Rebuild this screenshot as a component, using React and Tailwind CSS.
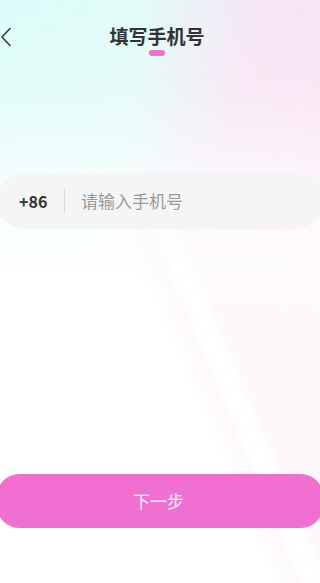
import React from 'react'

// Phone number entry page
const App = () => {
  return (
    <div
      className="relative w-[320px] h-[583px] overflow-hidden bg-white"
      style={{ fontFamily: '"Noto Sans CJK SC", "Noto Sans", sans-serif' }}
    >
      {/* background tint */}
      <div className="absolute inset-0 bg-[linear-gradient(100deg,#dcfcf9_0%,#e2fbf8_35%,#f6e6f4_60%,#fbe0f2_100%)]" />
      <div className="absolute inset-0 bg-[linear-gradient(180deg,rgba(255,255,255,0)_0%,rgba(255,255,255,0.15)_15%,rgba(255,255,255,0.85)_38%,#ffffff_50%)]" />
      <div className="absolute left-0 right-0 top-[180px] bottom-0 [mask-image:linear-gradient(to_bottom,transparent_0%,black_35%)] bg-[linear-gradient(67deg,rgba(255,255,255,0)_56%,rgba(252,243,248,0.6)_60%,rgba(255,255,255,0.9)_63%,rgba(255,255,255,0.9)_65%,rgba(252,244,249,0.7)_68%,rgba(252,245,249,0.7)_100%)]" />

      <div className="relative flex flex-col h-full">
        {/* header */}
        <div className="relative flex items-center justify-center h-[72px]">
          <button className="absolute left-0 top-[27px] text-[#333]">
            <svg width="12" height="20" viewBox="0 0 12 20" fill="none">
              <path d="M10 1.5L2 10l8 8.5" stroke="#3a3a3a" strokeWidth="1.6" strokeLinecap="round" strokeLinejoin="round" />
            </svg>
          </button>
          <div className="flex flex-col items-center -ml-[6px] pt-[6px]">
            <span className="text-[19px] leading-[26px] font-semibold text-[#333]">填写手机号</span>
            <span className="mt-[1px] w-[16px] h-[6px] rounded-full bg-[#f06fd0]" />
          </div>
        </div>

        {/* phone input */}
        <div className="mt-[101px] -mx-[3px] h-[56px] rounded-full bg-[#f4f4f4]/90 flex items-center">
          <span className="pl-[22px] w-[67px] text-[16px] font-bold text-[#333]">+86</span>
          <span className="w-px h-[24px] bg-[#dcdcdc]" />
          <span className="pl-[16px] text-[17px] text-[#9a9a9a]">请输入手机号</span>
        </div>

        {/* next button */}
        <div className="mt-[245px] -mx-[3px]">
          <button className="w-full h-[54px] rounded-[22px] bg-[#f06fd0] text-white text-[17px] flex items-center justify-center pr-[3px]">
            下一步
          </button>
        </div>
      </div>
    </div>
  )
}

export default App
